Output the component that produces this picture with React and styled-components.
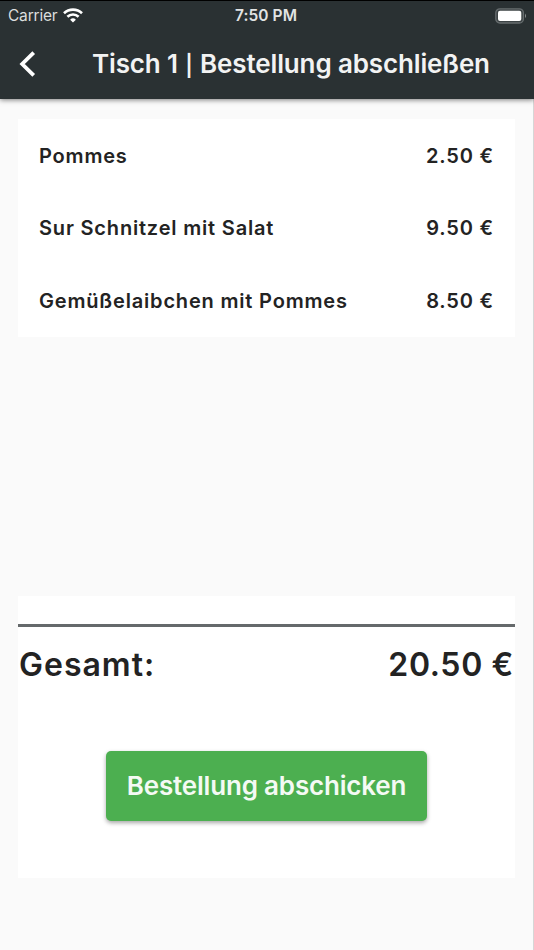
import React from 'react';
import styled, { createGlobalStyle } from 'styled-components';

const GlobalStyle = createGlobalStyle`
  * {
    box-sizing: border-box;
  }

  body {
    margin: 0;
    background: #fafafa;
    font-family: Inter, Roboto, "Liberation Sans", sans-serif;
    color: #232323;
    -webkit-font-smoothing: antialiased;
  }
`;

const Screen = styled.div`
  width: 534px;
  height: 950px;
  display: flex;
  flex-direction: column;
  background: linear-gradient(#d6d6d6, #d6d6d6) right / 1px 100% no-repeat #fafafa;
`;

const Header = styled.header`
  height: 99px;
  flex: none;
  background: #2a3133;
  border-top: 1px solid #000;
  box-shadow: 0 1px 5px rgba(0, 0, 0, 0.5);
  color: #f2f3f3;
`;

const StatusBar = styled.div`
  height: 28px;
  display: grid;
  grid-template-columns: 1fr auto 1fr;
  align-items: center;
  padding: 0 7px 0 8px;
  font-size: 15.5px;
  line-height: 28px;
`;

const Carrier = styled.div`
  display: flex;
  align-items: center;
  gap: 6px;
  letter-spacing: -0.2px;
  color: #dcdede;
`;

const Clock = styled.div`
  font-weight: 600;
  letter-spacing: 0.1px;
  margin-right: 3px;
  padding-top: 1px;
  color: #e2e4e4;
`;

const BatterySlot = styled.div`
  display: flex;
  justify-content: flex-end;
`;

const Toolbar = styled.div`
  height: 70px;
  display: flex;
  align-items: center;
  padding-left: 19px;
`;

const BackButton = styled.button`
  display: flex;
  width: 73px;
  padding: 0;
  border: none;
  background: none;
  color: inherit;
  cursor: pointer;
`;

const Title = styled.h1`
  margin: 0;
  padding-top: 1px;
  font-size: 26px;
  line-height: 32px;
  font-weight: 600;
  letter-spacing: -0.14px;
  white-space: nowrap;
`;

const TitleSeparator = styled.span`
  margin: 0 1px 0 1px;
  font-size: 21px;
`;

const Content = styled.main`
  flex: 1;
  display: flex;
  flex-direction: column;
  justify-content: space-between;
  padding: 20px 19px 72px 18px;
`;

const OrderList = styled.ul`
  margin: 0;
  padding: 0;
  list-style: none;
  background: #fff;
`;

const OrderRow = styled.li`
  height: 72.6px;
  display: flex;
  align-items: center;
  justify-content: space-between;
  padding: 1px 21px 0 21px;
  font-size: 20px;
  font-weight: 600;
  letter-spacing: 0.82px;
`;

const Summary = styled.section`
  height: 282px;
  padding-top: 28px;
  background: #fff;
`;

const Divider = styled.hr`
  height: 3px;
  margin: 0;
  border: none;
  background: #65696b;
`;

const TotalRow = styled.div`
  display: flex;
  justify-content: space-between;
  padding: 18px 1px 0 1px;
  font-size: 32px;
  line-height: 40px;
  font-weight: 600;
  letter-spacing: 1px;
`;

const TotalPrice = styled.span`
  letter-spacing: 0.65px;
`;

const SubmitButton = styled.button`
  display: block;
  width: 321px;
  height: 70px;
  margin: 66px 0 0 88px;
  padding: 0 0 1px;
  border: none;
  border-radius: 5px;
  background: #4caf50;
  box-shadow: 0 2px 4px rgba(0, 0, 0, 0.35);
  color: #f4faf4;
  font-family: inherit;
  font-size: 26px;
  font-weight: 600;
  letter-spacing: -0.18px;
  cursor: pointer;
`;

const WifiIcon = () => (
  <svg width="20" height="15" viewBox="0 0 20 15" fill="none" stroke="#fff" strokeWidth="2.6">
    <path d="M1 5.2a13 13 0 0 1 18 0" />
    <path d="M4.4 8.8a8 8 0 0 1 11.2 0" />
    <path d="M10 14.6L7.1 11.7a4.2 4.2 0 0 1 5.8 0z" fill="#fff" stroke="none" />
  </svg>
);

const BatteryIcon = () => (
  <svg width="32" height="16" viewBox="0 0 32 16">
    <rect x="0.8" y="0.8" width="27.6" height="14.2" rx="4" fill="#3c4345" stroke="#666c6e" strokeWidth="1.3" />
    <rect x="3" y="2.8" width="23.3" height="10.2" rx="2" fill="#fff" />
    <path d="M30 5.4q2 2.4 0 4.8z" fill="#8b9091" />
  </svg>
);

const BackIcon = () => (
  <svg width="17" height="28" viewBox="0 0 17 28" fill="none" stroke="#fff" strokeWidth="3.8">
    <path d="M14.7 2.7L3.2 14l11.5 11.3" />
  </svg>
);

const items = [
  { name: 'Pommes', price: 2.5 },
  { name: 'Sur Schnitzel mit Salat', price: 9.5 },
  { name: 'Gemüßelaibchen mit Pommes', price: 8.5 },
];

const formatPrice = (price) => `${price.toFixed(2)} €`;

const App = () => {
  const total = items.reduce((sum, item) => sum + item.price, 0);

  return (
    <>
      <GlobalStyle />
      <Screen>
        <Header>
          <StatusBar>
            <Carrier>
              <span>Carrier</span>
              <WifiIcon />
            </Carrier>
            <Clock>7:50 PM</Clock>
            <BatterySlot>
              <BatteryIcon />
            </BatterySlot>
          </StatusBar>
          <Toolbar>
            <BackButton aria-label="Zurück">
              <BackIcon />
            </BackButton>
            <Title>
              Tisch 1 <TitleSeparator>|</TitleSeparator> Bestellung abschließen
            </Title>
          </Toolbar>
        </Header>

        <Content>
          <OrderList>
            {items.map((item) => (
              <OrderRow key={item.name}>
                <span>{item.name}</span>
                <span>{formatPrice(item.price)}</span>
              </OrderRow>
            ))}
          </OrderList>

          <Summary>
            <Divider />
            <TotalRow>
              <span>Gesamt:</span>
              <TotalPrice>{formatPrice(total)}</TotalPrice>
            </TotalRow>
            <SubmitButton>Bestellung abschicken</SubmitButton>
          </Summary>
        </Content>
      </Screen>
    </>
  );
};

export default App;
